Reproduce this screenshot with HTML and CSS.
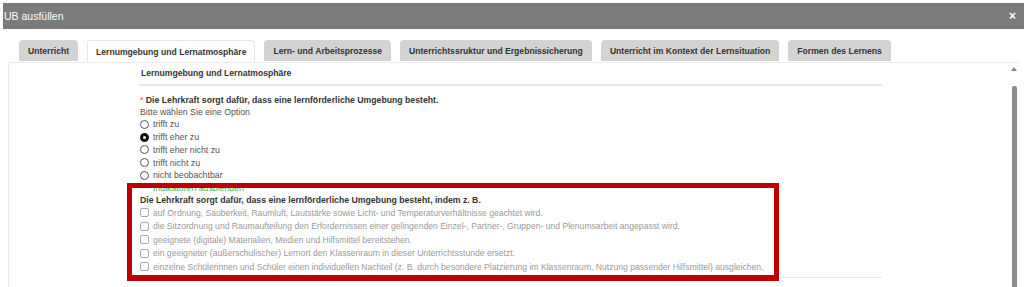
FILE: index.html
```html
<!DOCTYPE html>
<html lang="de">
<head>
  <meta charset="UTF-8">
  <title>UB ausfüllen</title>
  <link rel="stylesheet" href="styles.css">
</head>
<body>

  <div class="dialog">
    <div class="titlebar">
      <span class="title">UB ausfüllen</span>
      <span class="close">×</span>
    </div>

    <div class="tabs">
      <div class="tab">Unterricht</div>
      <div class="tab active">Lernumgebung und Lernatmosphäre</div>
      <div class="tab">Lern- und Arbeitsprozesse</div>
      <div class="tab">Unterrichtssruktur und Ergebnissicherung</div>
      <div class="tab">Unterricht im Kontext der Lernsituation</div>
      <div class="tab">Formen des Lernens</div>
    </div>

    <div class="panel">
      <div class="content">
        <div class="section-title">Lernumgebung und Lernatmosphäre</div>

        <div class="question"><span class="req">*</span> Die Lehrkraft sorgt dafür, dass eine lernförderliche Umgebung besteht.</div>
        <div class="hint">Bitte wählen Sie eine Option</div>
        <div class="options">
          <div class="option"><span class="radio"></span>trifft zu</div>
          <div class="option"><span class="radio checked"></span>trifft eher zu</div>
          <div class="option"><span class="radio"></span>trifft eher nicht zu</div>
          <div class="option"><span class="radio"></span>trifft nicht zu</div>
          <div class="option"><span class="radio"></span>nicht beobachtbar</div>
        </div>

        <div class="indicators">
          <div class="toggle">Indikatoren ausblenden</div>
          <div class="question">Die Lehrkraft sorgt dafür, dass eine lernförderliche Umgebung besteht, indem z. B.</div>
          <div class="checks">
            <div class="check"><span class="box"></span>auf Ordnung, Sauberkeit, Raumluft, Lautstärke sowie Licht- und Temperaturverhältnisse geachtet wird.</div>
            <div class="check"><span class="box"></span>die Sitzordnung und Raumaufteilung den Erfordernissen einer gelingenden Einzel-, Partner-, Gruppen- und Plenumsarbeit angepasst wird.</div>
            <div class="check"><span class="box"></span>geeignete (digitale) Materialien, Medien und Hilfsmittel bereitstehen.</div>
            <div class="check"><span class="box"></span>ein geeigneter (außerschulischer) Lernort den Klassenraum in dieser Unterrichtsstunde ersetzt.</div>
            <div class="check"><span class="box"></span>einzelne Schülerinnen und Schüler einen individuellen Nachteil (z. B. durch besondere Platzierung im Klassenraum, Nutzung passender Hilfsmittel) ausgleichen.</div>
          </div>
          <div class="highlight"></div>
        </div>
      </div>

      <div class="scrollbar">
        <div class="arrow"></div>
        <div class="thumb"></div>
      </div>
    </div>
  </div>

</body>
</html>
```

FILE: styles.css
```css
body {
  margin: 0;
  padding: 3px 0 0 3px;
  background-color: #fff;
  font-family: "Liberation Sans", Arial, sans-serif;
  color: #333;
  height: 284px;
  overflow: hidden;
}

.dialog {
  display: flex;
  flex-direction: column;
  height: 100%;
}

.titlebar {
  height: 26px;
  background-color: #7b7b7b;
  color: #fff;
  display: flex;
  align-items: center;
  justify-content: space-between;
  padding: 0 8px 0 1px;
  font-size: 10.5px;
}

.close {
  font-size: 12px;
  font-weight: bold;
}

.tabs {
  display: flex;
  gap: 9px;
  padding: 11px 0 0 16px;
}

.tab {
  flex-shrink: 0;
  white-space: nowrap;
  height: 21px;
  padding: 0 9px;
  display: flex;
  align-items: center;
  background-color: #d3d3d3;
  border-radius: 4px 4px 0 0;
  font-size: 8.6px;
  font-weight: bold;
  color: #333;
}

.tab.active {
  background-color: #fff;
  border: 1px solid #e6e6e6;
  border-bottom: none;
  padding: 0 8px;
}

.panel {
  flex: 1;
  display: flex;
  margin-left: 5px;
  margin-right: 5px;
  border-left: 1px solid #e9e9e9;
  border-top: 1px solid #ececec;
  overflow: hidden;
}

.content {
  flex: 1;
  display: flex;
  flex-direction: column;
  padding-left: 130px;
  padding-right: 127px;
}

.section-title {
  font-size: 8.6px;
  font-weight: bold;
  line-height: 12px;
  padding: 4px 2px 5px;
  border-bottom: 2px solid #e4e7ee;
}

.question {
  font-size: 8.7px;
  font-weight: bold;
  line-height: 12px;
  padding-left: 1px;
  white-space: nowrap;
}

.section-title + .question {
  margin-top: 8px;
}

.req {
  color: #e74c3c;
  font-weight: normal;
}

.hint {
  font-size: 8.75px;
  line-height: 12px;
  color: #555;
  padding-left: 1px;
}

.options {
  display: flex;
  flex-direction: column;
}

.option {
  display: flex;
  align-items: center;
  gap: 4px;
  height: 12.75px;
  font-size: 8.75px;
  color: #555;
}

.radio {
  width: 9px;
  height: 9px;
  border: 1px solid #555;
  border-radius: 50%;
  box-sizing: border-box;
  margin-left: 1px;
}

.radio.checked {
  border: 3px solid #111;
}

.indicators {
  position: relative;
  display: flex;
  flex-direction: column;
  border-bottom: 1px solid #e4e7ee;
  padding-bottom: 4px;
}

.toggle {
  font-size: 8.75px;
  line-height: 12px;
  color: #4caf50;
  padding-left: 14px;
}

.checks {
  display: flex;
  flex-direction: column;
}

.check {
  display: flex;
  align-items: center;
  gap: 4px;
  height: 13.5px;
  font-size: 8.6px;
  color: #9a9a9a;
  white-space: nowrap;
}

.box {
  flex-shrink: 0;
  width: 9px;
  height: 9px;
  border: 1px solid #aaa;
  border-radius: 2px;
  box-sizing: border-box;
  margin-left: 1px;
}

.highlight {
  position: absolute;
  top: 1px;
  left: -12px;
  width: 652px;
  height: 98px;
  border: 5px solid #c00000;
  border-bottom-width: 6px;
  box-sizing: border-box;
}

.scrollbar {
  width: 10px;
  display: flex;
  flex-direction: column;
  align-items: center;
}

.arrow {
  margin-top: 4px;
  width: 0;
  height: 0;
  border-left: 3px solid transparent;
  border-right: 3px solid transparent;
  border-bottom: 4px solid #888;
}

.thumb {
  margin-top: 15px;
  flex: 1;
  width: 5px;
  background-color: #8c8c8c;
  border-radius: 2px 2px 0 0;
}
```
